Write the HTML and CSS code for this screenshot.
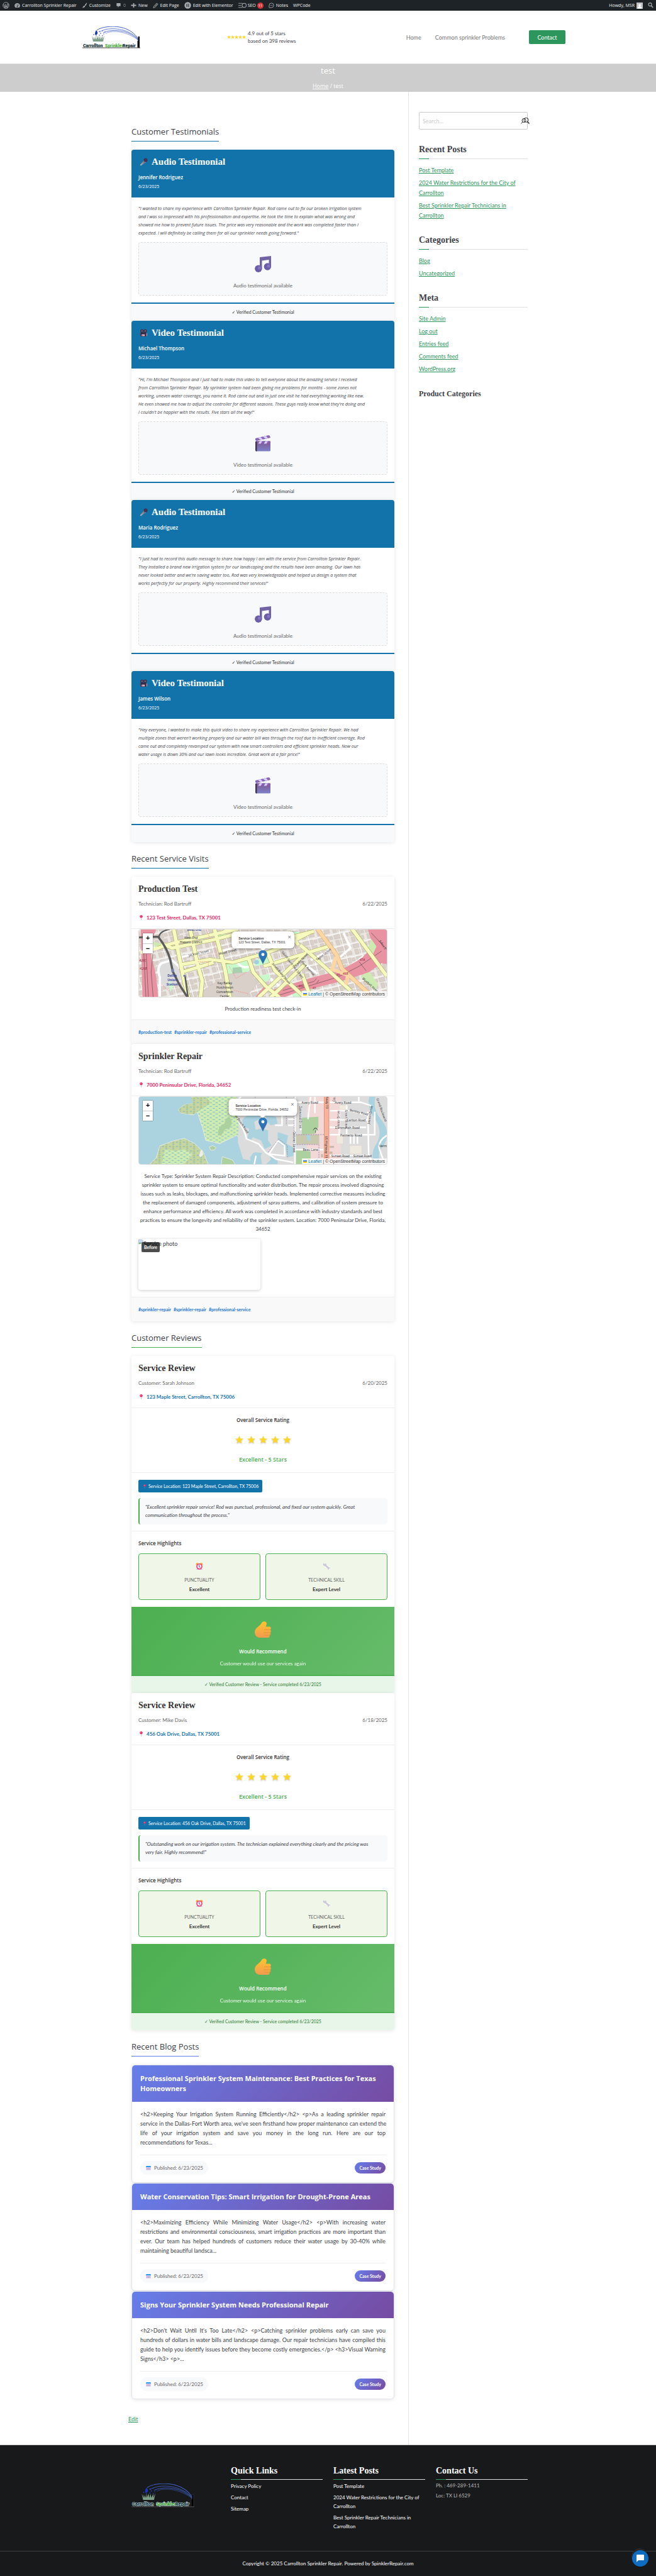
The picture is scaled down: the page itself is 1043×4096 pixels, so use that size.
FILE: index.html
```html
<!DOCTYPE html>
<html lang="en">
<head>
<meta charset="utf-8">
<meta name="viewport" content="width=device-width, initial-scale=1">
<title>test – Carrollton Sprinkler Repair</title>
<link rel="stylesheet" href="styles.css">
</head>
<body>
<svg class="defs" aria-hidden="true">
  <defs>
    <linearGradient id="gMic" x1="0" y1="1" x2="1" y2="0"><stop offset="0" stop-color="#b9b4bd"/><stop offset="1" stop-color="#6d6670"/></linearGradient>
    <linearGradient id="gClap" x1="0" y1="0" x2="0" y2="1"><stop offset="0" stop-color="#7c5a8d"/><stop offset="1" stop-color="#7f7fc9"/></linearGradient>
    <linearGradient id="gThumb" x1="0" y1="0" x2="0" y2="1"><stop offset="0" stop-color="#ffc62e"/><stop offset="1" stop-color="#f09a50"/></linearGradient>
    <linearGradient id="gPin" x1="0" y1="0" x2="0" y2="1"><stop offset="0" stop-color="#2e7bc0"/><stop offset="1" stop-color="#2a6fae"/></linearGradient>
  </defs>
  <symbol id="mic" viewBox="0 0 24 24"><path d="M1 21 12 8l5 5L4 23z" fill="url(#gMic)"/><path d="m11 7 6 7 2-1-7-7z" fill="#c8c3d0"/><circle cx="17.500" cy="6.500" r="5.800" fill="#3b2d4a"/><path d="m14 3 7 7M12 6l6 6M17 1l6 6" stroke="#6c5382" stroke-width="1"/></symbol>
  <symbol id="cam" viewBox="0 0 24 24"><circle cx="7" cy="6" r="5" fill="#42334c"/><circle cx="16.500" cy="6" r="5" fill="#42334c"/><circle cx="7" cy="6" r="1.700" fill="#8b7a98"/><circle cx="16.500" cy="6" r="1.700" fill="#8b7a98"/><rect x="3" y="10" width="16" height="12" rx="1.500" fill="#38283f"/><rect x="6" y="16" width="9" height="5" fill="#d9c9dc"/><path d="M7 18h4v2H7z" fill="#e0455f"/><path d="m19 14 4-2v10l-4-2z" fill="#8b7a98"/><path d="M0 13h3v3H0z" fill="#594763"/></symbol>
  <symbol id="note" viewBox="0 0 26 26"><path d="M8 2 26 0v17h-3.500V6L11.500 7.500V20H8z" fill="#7163a6"/><circle cx="5.800" cy="20.300" r="5.700" fill="#6c5ea6"/><circle cx="20.300" cy="17" r="5.700" fill="#6c5ea6"/><circle cx="7.500" cy="19" r="2.500" fill="#8573c4"/><circle cx="22" cy="16" r="2.500" fill="#8573c4"/></symbol>
  <symbol id="clap" viewBox="0 0 24 26"><path d="M0 5 21 0l2 1 1 3L2 9 0 8z" fill="#8a66b4"/><path d="m4 4 4 3.500 4-1L8 3zM12 2l4 3.500 4-1L17 1z" fill="#d6ceff"/><rect y="9.500" width="24" height="16" rx="1.500" fill="url(#gClap)"/><path d="M1 9.500h23v4H1z" fill="#8a5fb0"/><path d="M7 9.500h4l-2.500 4h-4zM16 9.500h4l-2.500 4h-4z" fill="#d6ceff"/><path d="M0 10h2.500v15.500H1L0 24z" fill="#3f3450"/></symbol>
  <symbol id="pin" viewBox="0 0 10 16"><path d="M4.500 8h1v8h-1z" fill="#9a8fa2"/><circle cx="5" cy="4.500" r="4.500" fill="#f0326a"/><circle cx="3.600" cy="3.200" r="1.300" fill="#ff8fb0"/></symbol>
  <symbol id="star" viewBox="0 0 24 24"><path d="m12 0 3.100 8.300 8.900.2-7 5.500 2.500 8.600L12 17.600l-7.500 5L7 14 0 8.500l8.900-.2z" fill="#fdd622"/></symbol>
  <symbol id="alarm" viewBox="0 0 24 24"><path d="M1 6a5 5 0 0 1 8-4L3 8zM23 6a5 5 0 0 0-8-4l6 6z" fill="#f5a623"/><path d="m4 20-2 3h20l-2-3z" fill="#d9b6f0"/><circle cx="12" cy="12.500" r="9.700" fill="#f2416e"/><circle cx="12" cy="12.500" r="6.300" fill="#ece4fb"/><path d="M11.500 8v5l3 2.500" fill="none" stroke="#3b2d4a" stroke-width="1.600"/></symbol>
  <symbol id="wrench" viewBox="0 0 24 24"><path d="M1 5 4 1.500 5.500 5l2.500.500L8.500 2l3 2.500v4l8.500 7c2-.5 4 1 4 3.500l-2.500-.5-2 1.500.5 3c-3 0-4.500-2-4-4.500l-8.500-7.500C4 11.500 1 9 1 5z" fill="#cdc4dd"/></symbol>
  <symbol id="thumb" viewBox="0 0 26 26"><path d="M0 17.500c0-4 2-6.500 5.500-9C8.500 6 10 4.500 11 2.500 12.500-.5 17-.5 18.500 2c1 2 0 4.500-1 6.500H24c2 .8 2.300 3.800.6 5 1.600 1 1.600 3.600 0 4.600 1.200 1.200.8 3.200-.8 3.900C24 24.500 23 26 21 26H9c-5.500 0-9-3.500-9-8.500z" fill="url(#gThumb)"/><path d="M15 13.500h10M14 18h11M15 22h9" stroke="#e0912b" stroke-width=".8" fill="none"/></symbol>
  <symbol id="cal" viewBox="0 0 16 14"><rect y="1" width="16" height="13" rx="1.500" fill="#e3d5f3"/><path d="M1 0h14l1 4H0z" fill="#2196f3"/><path d="M3.500 6v6M6.500 6v6M9.500 6v6M12.500 6v6" stroke="#9c86bb" stroke-width="1.600" stroke-dasharray="1.500 .7"/></symbol>
  <symbol id="marker" viewBox="0 0 14 23"><path d="M7 0a6.800 6.800 0 0 1 6.800 7c0 4-4 8.500-6.800 15.500C4.200 15.500.2 11 .2 7A6.800 6.800 0 0 1 7 0z" fill="url(#gPin)" stroke="#2564a0" stroke-width=".6"/><circle cx="7" cy="7" r="2.600" fill="#fff"/></symbol>
  <symbol id="broken" viewBox="0 0 16 16"><path d="M1 1h10l4 4v3l-4 2-4 5H1z" fill="#c5dcf5" stroke="#9aa0a6"/><path d="M2 13c2-4 4-4 6-1l-1 2H2z" fill="#55a84f"/></symbol>
  <symbol id="arcs" viewBox="0 0 92 24">
    <g fill="none" stroke="#3f5fc4"><path d="M23 6C31 0 55-3 72 5c10 5 16 12 18 18" stroke-width="1"/><path d="M27 9c12-8 34-6 46 0 9 4 14 9 17 14" stroke-width=".8"/><path d="M33 10c12-6 32-4 43 2 7 4 11 7 14 11" stroke-width=".8"/><path d="M39 10c12-4 28-1 39 5 6 3 9 5 11 8" stroke-width=".6"/></g>
  </symbol>
  <symbol id="drops" viewBox="0 0 92 35">
    <path d="M22 6c2 2 3 5 1 7-1 1-3 1-3-1 0-3 1-4 2-6z" fill="#1a35c4"/>
    <g fill="#2a48c4"><circle cx="27" cy="8" r=".8"/><circle cx="32" cy="7" r=".7"/><circle cx="36" cy="9" r=".7"/><circle cx="29" cy="11" r=".8"/><circle cx="34" cy="12" r=".7"/><circle cx="18" cy="13" r=".8"/><circle cx="27" cy="14" r=".8"/><circle cx="32" cy="14.500" r=".7"/><circle cx="22" cy="15" r=".7"/><circle cx="38" cy="11" r=".6"/></g>
    <path d="m17 24-2-9 3 6 0-5 2 5 2-6 0 6 3-6 1 6 2-6 1 6 3-6 0 6 3-7-2 10z" fill="#7d9e86"/>
  </symbol>
</svg>

<nav class="adminbar" aria-label="Toolbar">
  <ul class="bar-left">
    <li class="i-wp"><svg viewBox="0 0 20 20" class="ic11"><circle cx="10" cy="10" r="8.800" fill="none" stroke="#a7aaad" stroke-width="1.600"/><path d="m3.500 7 4 10 2.500-7-1.500-3.500M9 7l4 10 3-8c0-2-1-3-2-4" fill="none" stroke="#a7aaad" stroke-width="2"/></svg></li>
    <li><a href="#"><svg viewBox="0 0 20 20" class="ic9"><path d="M10 2a9 9 0 0 0-8 14c0 1 1 2 2 2h12c1 0 2-1 2-2a9 9 0 0 0-8-14z" fill="#a7aaad"/><path d="m10 14 3-8" stroke="#1d2327" stroke-width="2"/><circle cx="10" cy="14" r="2" fill="#1d2327"/><circle cx="5" cy="11" r="1" fill="#1d2327"/><circle cx="15" cy="11" r="1" fill="#1d2327"/><circle cx="7" cy="6.500" r="1" fill="#1d2327"/></svg>Carrollton Sprinkler Repair</a></li>
    <li><a href="#"><svg viewBox="0 0 20 20" class="ic9"><path d="M18 1c1 1 0 4-5 11l-3-2c4-6 7-9 8-9zM9 11l3 2c-1 4-5 6-10 6 2-3 3-7 7-8z" fill="#a7aaad"/></svg>Customize</a></li>
    <li class="dim"><a href="#"><svg viewBox="0 0 20 20" class="ic9"><path d="M4 2h12c1 0 1 .5 1 1v9c0 1 0 1-1 1h-5l-3 6v-6H4c-1 0-1 0-1-1V3c0-.5 0-1 1-1z" fill="#a7aaad"/></svg>0</a></li>
    <li><a href="#"><svg viewBox="0 0 20 20" class="ic9"><path d="M8 2h4v6h7v4h-7v6H8v-6H1V8h7z" fill="#a7aaad"/></svg>New</a></li>
    <li><a href="#"><svg viewBox="0 0 20 20" class="ic9"><path d="m14 2 4 4-10 11-6 2 2-6z" fill="none" stroke="#a7aaad" stroke-width="2"/><path d="m7 14 8-9" stroke="#a7aaad" stroke-width="2"/></svg>Edit Page</a></li>
    <li><a href="#"><svg viewBox="0 0 20 20" class="ic11"><circle cx="10" cy="10" r="9.500" fill="#a7aaad"/><path d="M6.500 6v8M9 6.700h5M9 10h5M9 13.300h5" stroke="#1d2327" stroke-width="1.600"/></svg>Edit with Elementor</a></li>
    <li class="seo"><a href="#"><svg viewBox="0 0 24 20" class="ic12"><path d="M0 4h12M0 10h8M0 16h12" stroke="#a7aaad" stroke-width="1.600"/><circle cx="17" cy="10" r="6" fill="none" stroke="#a7aaad" stroke-width="2"/></svg>SEO <b class="count">11</b></a></li>
    <li><a href="#"><svg viewBox="0 0 20 20" class="ic9"><path d="M2 18V10a8 8 0 1 1 8 8z" fill="none" stroke="#a7aaad" stroke-width="2"/><circle cx="6.500" cy="10" r="1.200" fill="#a7aaad"/><circle cx="10" cy="10" r="1.200" fill="#a7aaad"/><circle cx="13.500" cy="10" r="1.200" fill="#a7aaad"/></svg>Notes</a></li>
    <li><a href="#">WPCode</a></li>
  </ul>
  <ul class="bar-right">
    <li><a href="#">Howdy, MSR <svg viewBox="0 0 20 20" class="ic10"><path d="M0 0h20v20H0z" fill="#c3c4c7"/><path d="M10 5c6 0 3 7 2 8l4 2v4H4v-4l4-2c-1-1-4-8 2-8z" fill="#fff"/></svg></a></li>
    <li><svg viewBox="0 0 20 20" class="ic9"><circle cx="8" cy="7" r="5.500" fill="none" stroke="#a7aaad" stroke-width="2.500"/><path d="m12 11 6 7" stroke="#a7aaad" stroke-width="3.500"/></svg></li>
  </ul>
</nav>

<header class="site-header">
  <div class="header-inner">
    <a href="#" class="logo" aria-label="Carrollton Sprinkler Repair">
      <svg viewBox="0 0 92 35"><use href="#arcs" width="92" height="24"/><use href="#drops" width="92" height="35"/><path d="M88.500 16h2.500v18h-3.500V23h1z" fill="#111"/><path d="M0 33.500h92v1H0z" fill="#444"/>
      <g class="logo-text"><text x="1" y="32.500" fill="#0b2a30">Carrollton</text><text x="36" y="32.500" fill="#4fae3e">Sprinkler</text><text x="64" y="32.500" fill="#0b2a30">Repair</text></g></svg>
    </a>
    <div class="rating">
      <span class="mini-stars"><svg><use href="#star"/></svg><svg><use href="#star"/></svg><svg><use href="#star"/></svg><svg><use href="#star"/></svg><svg><use href="#star"/></svg></span>
      <p>4.9 out of 5 stars<br>based on 398 reviews</p>
    </div>
    <nav class="main-nav" aria-label="Main"><a href="#">Home</a><a href="#">Common sprinkler Problems</a></nav>
    <button type="button" class="contact-btn">Contact</button>
  </div>
</header>

<section class="page-title">
  <h1>test</h1>
  <p><a href="#">Home</a> / test</p>
</section>

<div class="layout">
<main class="content">
  <h2 class="sec">Customer Testimonials</h2>

  <article class="card">
    <header class="t-head"><h3><svg class="ic14"><use href="#mic"/></svg>Audio Testimonial</h3><strong>Jennifer Rodriguez</strong><time>6/23/2025</time></header>
    <div class="t-body">
      <p class="quote"><span>"I wanted to share my experience with Carrollton Sprinkler Repair. Rod came out to fix our broken irrigation system</span> <span>and I was so impressed with his professionalism and expertise. He took the time to explain what was wrong and</span> <span>showed me how to prevent future issues. The price was very reasonable and the work was completed faster than I</span> <span>expected. I will definitely be calling them for all our sprinkler needs going forward."</span></p>
      <div class="media"><svg class="ic26"><use href="#note"/></svg><span>Audio testimonial available</span></div>
    </div>
    <footer class="t-foot"><i>✓</i> Verified Customer Testimonial</footer>
  </article>

  <article class="card">
    <header class="t-head"><h3><svg class="ic14"><use href="#cam"/></svg>Video Testimonial</h3><strong>Michael Thompson</strong><time>6/23/2025</time></header>
    <div class="t-body">
      <p class="quote"><span>"Hi, I'm Michael Thompson and I just had to make this video to tell everyone about the amazing service I received</span> <span>from Carrollton Sprinkler Repair. My sprinkler system had been giving me problems for months - some zones not</span> <span>working, uneven water coverage, you name it. Rod came out and in just one visit he had everything working like new.</span> <span>He even showed me how to adjust the controller for different seasons. These guys really know what they're doing and</span> <span>I couldn't be happier with the results. Five stars all the way!"</span></p>
      <div class="media"><svg class="ic26"><use href="#clap"/></svg><span>Video testimonial available</span></div>
    </div>
    <footer class="t-foot"><i>✓</i> Verified Customer Testimonial</footer>
  </article>

  <article class="card">
    <header class="t-head"><h3><svg class="ic14"><use href="#mic"/></svg>Audio Testimonial</h3><strong>Maria Rodriguez</strong><time>6/23/2025</time></header>
    <div class="t-body">
      <p class="quote"><span>"I just had to record this audio message to share how happy I am with the service from Carrollton Sprinkler Repair.</span> <span>They installed a brand new irrigation system for our landscaping and the results have been amazing. Our lawn has</span> <span>never looked better and we're saving water too. Rod was very knowledgeable and helped us design a system that</span> <span>works perfectly for our property. Highly recommend their services!"</span></p>
      <div class="media"><svg class="ic26"><use href="#note"/></svg><span>Audio testimonial available</span></div>
    </div>
    <footer class="t-foot"><i>✓</i> Verified Customer Testimonial</footer>
  </article>

  <article class="card">
    <header class="t-head"><h3><svg class="ic14"><use href="#cam"/></svg>Video Testimonial</h3><strong>James Wilson</strong><time>6/23/2025</time></header>
    <div class="t-body">
      <p class="quote"><span>"Hey everyone, I wanted to make this quick video to share my experience with Carrollton Sprinkler Repair. We had</span> <span>multiple zones that weren't working properly and our water bill was through the roof due to inefficient coverage. Rod</span> <span>came out and completely revamped our system with new smart controllers and efficient sprinkler heads. Now our</span> <span>water usage is down 30% and our lawn looks incredible. Great work at a fair price!"</span></p>
      <div class="media"><svg class="ic26"><use href="#clap"/></svg><span>Video testimonial available</span></div>
    </div>
    <footer class="t-foot"><i>✓</i> Verified Customer Testimonial</footer>
  </article>

  <h2 class="sec">Recent Service Visits</h2>

  <article class="card">
    <header class="v-head"><h3>Production Test</h3><p class="meta"><span>Technician: Rod Bartruff</span><time>6/22/2025</time></p><p class="addr pink"><svg class="icpin"><use href="#pin"/></svg>123 Test Street, Dallas, TX 75001</p></header>
    <div class="map">
      <svg class="map-art" viewBox="0 0 396 109" preserveAspectRatio="xMidYMid slice">
        <defs><pattern id="bld" width="92" height="84" patternUnits="userSpaceOnUse" patternTransform="rotate(-14)"><path d="M0 0h92v84H0z" fill="#ebe7e3"/><g fill="#d9d0c9" stroke="#c4b6ab" stroke-width="2"><path d="M6 8h34v26H6zM48 6h16v34H48zM70 12h18v20H70zM8 44h20v32H8zM36 48h44v24H36z"/></g><path d="M0 2h92M44 0v84" stroke="#fff" stroke-width="4"/></pattern></defs>
        <g transform="scale(.277 .2425) translate(-70 -535)">
          <path d="M70 535h1430v450H70z" fill="url(#bld)"/>
          <path d="M180 760q60-60 110-10l20 120-60 60q-60-20-70-90z" fill="#dcdcdc"/>
          <g fill="#c8facc"><path d="m565 770 130-35 20 60-40 60-100 10zM735 745l75-35 10 50-80 20zM740 850l80-20 10 30-40 30zM240 870l30 40-20 40zM940 560l50-10 10 30-40 15zM530 565l40 0 0 30-40 0zM955 960l80-40 20 60h-100z"/></g>
          <path d="m1350 850 40-50 60 100-20 40zM1385 680l25-80 30 50zM150 620l50 10-30 40z" fill="#cdebb0"/>
          <path d="m610 790 50-5 10 55-60 0z" fill="#aacfaf"/>
          <circle cx="749" cy="753" r="14" fill="#9fcfe0"/>
          <path d="m450 930 140-100 130-15 30 80-60 85H430z" fill="#d9d0c9" stroke="#c4b6ab"/>
          <g fill="none" stroke="#fff" stroke-width="14"><path d="M190 980V850q-20-60 10-90l60-20 60 60M640 760q30 40 70 20M830 860l60 60 70-60M1020 760l80 70M1250 560l40 100-60 60M1060 740l120-70M1280 790l90-80M540 680l140-40M310 720l170-40"/></g>
          <g fill="#e892a2"><path d="M80 535h90q-50 130-20 220 25 90 30 230H90zM830 940l220-80 170-50q80-40 140-90l60-70 75 40V740l-100 80-160 60-250 70-90 40z"/><path d="M1390 535h110v230q-60 0-70-80zM740 985l50-70 20 20-30 50z"/></g>
          <path d="m1410 600 30 50-20 50-30-10z" fill="#cdebb0"/>
          <g fill="none" stroke="#3b3b3b" stroke-width="2"><path d="M95 620l15 365M112 700l12 285M150 700l-10 120 12 165M880 970l340-120 120-70 130-100M900 940l180-60M1340 750l40 60M1410 560l90 110M1080 880l14-20M1095 890l14-20"/></g>
          <g fill="none" stroke="#a8ab5e" stroke-width="26" stroke-linejoin="round"><path d="M180 660l80-30 240-60 140-35M200 630l60 30 240-55 120-35M310 770l170-35 130 20 190-60 90-40 170-100M330 815l170-60M270 535l60 340 25 110M365 535l40 220 30 120-10 110M505 535l60 260 30 190M590 535l-50 30M700 720l30 100 70 90 80 75M815 700l40 110 110 110 60 65M760 985l280-300M830 985l200-220M1000 640l70 70 220 230M790 780l370-130M1300 535l200 310M990 640l-60-90M940 590l140-40M1010 830l50 155"/></g>
          <g fill="none" stroke="#f7fabf" stroke-width="21" stroke-linejoin="round"><path d="M80 690l100-30 80-30 240-60 140-35M200 630l60 30 240-55 120-35M310 770l170-35 130 20 190-60 90-40 170-100M330 815l170-60M270 535l60 340 25 110M365 535l40 220 30 120-10 110M505 535l60 260 30 190M590 535l-50 30M700 720l30 100 70 90 80 75M815 700l40 110 110 110 60 65M760 985l280-300M830 985l200-220M1000 640l70 70 220 230M790 780l370-130M1300 535l200 310M990 640l-60-90M940 590l140-40M1010 830l50 155"/></g>
          <g fill="none" stroke="#e0a35a" stroke-width="26"><path d="M1100 535l110 170 30 90 180 190"/></g><g fill="none" stroke="#fcd6a4" stroke-width="22"><path d="M1100 535l110 170 30 90 180 190M1205 720l-20 80 90 40-10 60"/></g>
          <path d="M70 590l110-5q50 70 70 150l15 80 40 90 45 80" fill="none" stroke="#5c5c5c" stroke-width="13"/>
          <path d="M250 535q-80 20-60 70M335 840l18 145" fill="none" stroke="#5c5c5c" stroke-width="9"/>
          <path d="M257 798h15v20h-15zM326 836h11v13h-11z" fill="#7981b0"/>
          <g fill="none" stroke="#fa8072" stroke-width="3" stroke-dasharray="6 5"><path d="M590 780l40 80 60-40M410 750h60v30M500 620l20 100M200 900l40 40M620 940l80 20M460 540l20 60"/></g>
        </g>
        <g class="map-lbl">
          <text x="88" y="3" fill="#4248a0" font-weight="700">West End</text>
          <text x="83" y="16">West End</text><text x="83" y="23">Historic District</text>
          <text x="53" y="76" fill="#4248a0" font-weight="700">Dallas</text><text x="53" y="83" fill="#4248a0" font-weight="700">Union</text><text x="53" y="90" fill="#4248a0" font-weight="700">Station</text>
          <text x="137" y="88">Kay Bailey</text><text x="137" y="95">Hutchinson</text><text x="137" y="102">Convention</text><text x="137" y="109">Center</text>
          <text transform="translate(96 40) rotate(-13)">Jackson Street</text><text transform="translate(142 38) rotate(-14)">Wood Street</text>
          <text transform="translate(244 58) rotate(52)">South Saint Paul Street</text><text transform="translate(226 72) rotate(50)">South Ervay Street</text><text transform="translate(261 50) rotate(-46)">Cadiz Street</text><text transform="translate(269 64) rotate(48)">Park Avenue</text><text transform="translate(296 42) rotate(-38)">Taylor Street</text><text transform="translate(369 91) rotate(42)">Bluebell Street</text><text transform="translate(388 26) rotate(58)">Julius S</text>
          <g fill="#a02040" font-style="italic"><text x="6" y="52">428C</text><text x="7" y="65">428B</text><text x="259" y="93">46A</text><text x="280" y="96">46</text><text x="318" y="75">45</text><text x="330" y="73">46B</text><text x="357" y="51">47A</text></g>
        </g>
      </svg>
      <div class="zoomer"><button type="button" aria-label="Zoom in">+</button><button type="button" aria-label="Zoom out">−</button></div>
      <div class="popup"><strong>Service Location</strong><span>123 Test Street, Dallas, TX 75001</span><b>×</b></div>
      <svg class="marker"><use href="#marker"/></svg>
      <p class="attrib"><svg viewBox="0 0 12 8"><path d="M0 0h12v4H0z" fill="#4c7be1"/><path d="M0 4h12v4H0z" fill="#ffd500"/></svg><a href="#">Leaflet</a> | © OpenStreetMap contributors</p>
    </div>
    <p class="v-text">Production readiness test check-in</p>
    <footer class="tags"><a href="#">#production-test</a><a href="#">#sprinkler-repair</a><a href="#">#professional-service</a></footer>
  </article>

  <article class="card">
    <header class="v-head"><h3>Sprinkler Repair</h3><p class="meta"><span>Technician: Rod Bartruff</span><time>6/22/2025</time></p><p class="addr pink"><svg class="icpin"><use href="#pin"/></svg>7000 Peninsular Drive, Florida, 34652</p></header>
    <div class="map">
      <svg class="map-art" viewBox="0 0 396 109" preserveAspectRatio="xMidYMid slice">
        <defs><pattern id="marsh" width="34" height="22" patternUnits="userSpaceOnUse"><path d="M0 0h34v22H0z" fill="#cdebb0"/><path d="M2 5h12M20 16h12" stroke="#4f9ed8" stroke-width="2.500"/><path d="M22 4h2M6 14h2M28 9h2" stroke="#fff" stroke-width="2"/></pattern>
        <pattern id="mang" width="40" height="26" patternUnits="userSpaceOnUse"><path d="M0 0h40v26H0z" fill="#c6d6a0"/><path d="M3 6h12M22 19h12" stroke="#4f9ed8" stroke-width="2.500"/><circle cx="28" cy="7" r="4" fill="none" stroke="#6f9a5d" stroke-width="1.500"/></pattern></defs>
        <g transform="scale(.277 .2702) translate(-70 -99)">
          <path d="M70 99h1430v405H70z" fill="#aad3df"/>
          <path d="M370 99l20 40-60 10-35 30 20 20 70 10 20-20 30 90 20 80 80 20 60-30 40-20 50 80 20-80-20-130 10-100z" fill="url(#marsh)" stroke="#f2efe9" stroke-width="3"/>
          <path d="M370 105l10 34-50 10-35 30 20 20 70 8 40-30 60-40-30-35z" fill="url(#mang)"/>
          <path d="M525 330q0-60 40-70 0-40 30-35 20 30 0 60l-30 10-20 35z" fill="#add19e"/>
          <path d="M130 502l40-40 20-70 80-30 60-15 60 30 50 50 30 75z" fill="url(#mang)" stroke="#f2efe9" stroke-width="3"/>
          <path d="M200 502l20-90 60 10 50-10 50 30-50 60z" fill="url(#marsh)"/>
          <path d="M475 400l20-10 20 12-10 14-20 2zM550 456l60 20 15 26h-80z" fill="#add19e" stroke="#f2efe9" stroke-width="3"/>
          <path d="M425 420l10-5 5 30-15 15-8-10z" fill="#eee"/>
          <path d="M635 99h865v405H850l-20-30-30 30h-50l30-70-40-5-20 50-50-10-30-100 5-100-15-90z" fill="#dcdcdc"/>
          <g fill="#aad3df"><path d="M665 240q30-40 70-30l20-10 20 30-40 20 10 60-30 50-20-10 10-60-30-10zM800 210l60 10 10 40-40 10-20-20zM735 300l40-10 40 10 0 60 20 30-40 20-20-50-50-20zM870 310l60 20-10 50 40 20 0 50-30 10-20-60-40-30zM780 502l-10-60-40-10-20 30 10 40zM820 440l50 30v30h-30z"/></g>
          <path d="M1045 99h190v405h-190q-20-200 0-405z" fill="#f2d9d8"/>
          <g fill="#add19e"><path d="M1010 225l95-5 0 60-20 40-75 5zM975 415l85 10v80h-85z"/></g>
          <path d="M975 325h135v58H975z" fill="#c8c8ae"/><path d="M1035 328h24v34l-18-2z" fill="#aad3df"/>
          <path d="M1400 99q-20 60 30 130 50 80 10 150-40 60-10 125h35q-30-70 20-120 40-80-20-150-50-60-30-135z" fill="#aad3df"/>
          <path d="M1210 330h38v50h-38zM1285 390h70v50h-70zM1225 150h50v30h-50z" fill="#eeeadf" stroke="#cfc8b4"/>
          <g fill="none" stroke="#fff" stroke-width="9"><path d="M640 240q40 60 50 110l70 30 40 50 60 40 100 20M970 99v405M970 134h170M1170 134h180l60 20M1170 238h220M1170 184h120l90 25M1170 282h210M1170 326h260M1170 448h220M975 414h160M1338 99v30M1390 190l5 250 20 50M1430 190v140M1500 330q-60 40-40 90l30 84M1225 180v140M1268 150v170M930 270h40M930 234h40M895 150v120h-40M1003 150v150M1060 99l-15 135M1085 99v100M1290 330v50M1310 330v50M1330 330v50M820 440l50-80 40 30v60zM745 450l-10 50M660 99l-40 40"/></g>
          <g fill="none" stroke="#a07fa8" stroke-width="3" stroke-dasharray="9 5"><path d="M920 99v170M965 99v205M975 325h170M1108 384v110M980 384h128M815 430l60-80 50 40v75M740 99v25"/></g>
          <path d="M1152 99v405" stroke="#df8a74" stroke-width="30"/><path d="M1152 99v405" stroke="#f9b29c" stroke-width="24"/>
          <path d="M1170 392h25v12h-25zM1120 440h12v20h-12zM1170 425h16v14h-16z" fill="#cbb9ab"/>
          <path d="M1088 300v15M1078 292q10-12 20 0M1074 300q14-24 28 0" fill="none" stroke="#555" stroke-width="3"/>
        </g>
        <g class="map-lbl">
          <text x="273" y="12">Avery Road</text><text x="326" y="12">Avery Road</text><text transform="translate(351 27) rotate(14)">Berkley Road</text><text x="347" y="40">Carlton Road</text><text x="333" y="52">Dartmouth Road</text><text x="339" y="64">Palmetto Road</text><text x="274" y="87">Beau Lane</text><text x="322" y="97">Sunset Road</text><text x="357" y="97">Sunset Road</text><text x="390" y="81">Verm</text>
          <text transform="translate(256 33) rotate(90)">Oakwood Drive</text><text transform="translate(246 73) rotate(90)">Oelsner Street</text><text transform="translate(297 81) rotate(90)">US Highway 19</text><text transform="translate(299 10) rotate(90)">hway 19</text><text transform="translate(321 36) rotate(-90)">Astor Drive</text><text transform="translate(330 36) rotate(90)">Green Street</text><text transform="translate(386 22) rotate(70)">Grand Boulevard</text><text transform="translate(371 30) rotate(-80)">Jasmin Drive</text><text transform="translate(162 44) rotate(55)">oor Beach Road</text><text transform="translate(314 4) rotate(-90)">Cou</text>
        </g>
      </svg>
      <div class="zoomer"><button type="button" aria-label="Zoom in">+</button><button type="button" aria-label="Zoom out">−</button></div>
      <div class="popup"><strong>Service Location</strong><span>7000 Peninsular Drive, Florida, 34652</span><b>×</b></div>
      <svg class="marker"><use href="#marker"/></svg>
      <p class="attrib"><svg viewBox="0 0 12 8"><path d="M0 0h12v4H0z" fill="#4c7be1"/><path d="M0 4h12v4H0z" fill="#ffd500"/></svg><a href="#">Leaflet</a> | © OpenStreetMap contributors</p>
    </div>
    <p class="v-text v-long"><span>Service Type: Sprinkler System Repair Description: Conducted comprehensive repair services on the existing</span> <span>sprinkler system to ensure optimal functionality and water distribution. The repair process involved diagnosing</span> <span>issues such as leaks, blockages, and malfunctioning sprinkler heads. Implemented corrective measures including</span> <span>the replacement of damaged components, adjustment of spray patterns, and calibration of system pressure to</span> <span>enhance performance and efficiency. All work was completed in accordance with industry standards and best</span> <span>practices to ensure the longevity and reliability of the sprinkler system. Location: 7000 Peninsular Drive, Florida,</span> <span>34652</span></p>
    <div class="photo"><svg><use href="#broken"/></svg><span>Service photo</span><b>Before</b></div>
    <footer class="tags"><a href="#">#sprinkler-repair</a><a href="#">#sprinkler-repair</a><a href="#">#professional-service</a></footer>
  </article>

  <h2 class="sec green">Customer Reviews</h2>

  <article class="card">
    <header class="v-head"><h3>Service Review</h3><p class="meta"><span>Customer: Sarah Johnson</span><time>6/20/2025</time></p><p class="addr blue"><svg class="icpin"><use href="#pin"/></svg>123 Maple Street, Carrollton, TX 75006</p></header>
    <section class="r-rate"><h4>Overall Service Rating</h4><div class="stars"><svg><use href="#star"/></svg><svg><use href="#star"/></svg><svg><use href="#star"/></svg><svg><use href="#star"/></svg><svg><use href="#star"/></svg></div><p>Excellent - 5 Stars</p></section>
    <section class="r-quote"><p class="loc"><svg><use href="#pin"/></svg>Service Location: 123 Maple Street, Carrollton, TX 75006</p><blockquote><span>"Excellent sprinkler repair service! Rod was punctual, professional, and fixed our system quickly. Great</span> <span>communication throughout the process."</span></blockquote></section>
    <section class="r-high"><h4>Service Highlights</h4><div class="pair"><div><svg><use href="#alarm"/></svg><span>PUNCTUALITY</span><strong>Excellent</strong></div><div><svg><use href="#wrench"/></svg><span>TECHNICAL SKILL</span><strong>Expert Level</strong></div></div></section>
    <section class="r-rec"><svg class="ic26"><use href="#thumb"/></svg><h4>Would Recommend</h4><p>Customer would use our services again</p></section>
    <footer class="r-foot"><i>✓</i> Verified Customer Review - Service completed 6/23/2025</footer>
  </article>

  <article class="card">
    <header class="v-head"><h3>Service Review</h3><p class="meta"><span>Customer: Mike Davis</span><time>6/18/2025</time></p><p class="addr blue"><svg class="icpin"><use href="#pin"/></svg>456 Oak Drive, Dallas, TX 75001</p></header>
    <section class="r-rate"><h4>Overall Service Rating</h4><div class="stars"><svg><use href="#star"/></svg><svg><use href="#star"/></svg><svg><use href="#star"/></svg><svg><use href="#star"/></svg><svg><use href="#star"/></svg></div><p>Excellent - 5 Stars</p></section>
    <section class="r-quote"><p class="loc"><svg><use href="#pin"/></svg>Service Location: 456 Oak Drive, Dallas, TX 75001</p><blockquote><span>"Outstanding work on our irrigation system. The technician explained everything clearly and the pricing was</span> <span>very fair. Highly recommend!"</span></blockquote></section>
    <section class="r-high"><h4>Service Highlights</h4><div class="pair"><div><svg><use href="#alarm"/></svg><span>PUNCTUALITY</span><strong>Excellent</strong></div><div><svg><use href="#wrench"/></svg><span>TECHNICAL SKILL</span><strong>Expert Level</strong></div></div></section>
    <section class="r-rec"><svg class="ic26"><use href="#thumb"/></svg><h4>Would Recommend</h4><p>Customer would use our services again</p></section>
    <footer class="r-foot"><i>✓</i> Verified Customer Review - Service completed 6/23/2025</footer>
  </article>

  <h2 class="sec indigo">Recent Blog Posts</h2>

  <article class="card post">
    <header><h3><span>Professional Sprinkler System Maintenance: Best Practices for Texas</span> <span>Homeowners</span></h3></header>
    <p><span>&lt;h2&gt;Keeping Your Irrigation System Running Efficiently&lt;/h2&gt; &lt;p&gt;As a leading sprinkler repair</span> <span>service in the Dallas-Fort Worth area, we've seen firsthand how proper maintenance can extend the</span> <span>life of your irrigation system and save you money in the long run. Here are our top</span> <span>recommendations for Texas...</span></p>
    <footer><span class="pub"><svg><use href="#cal"/></svg>Published: 6/23/2025</span><span class="badge">Case Study</span></footer>
  </article>
  <article class="card post">
    <header><h3><span>Water Conservation Tips: Smart Irrigation for Drought-Prone Areas</span></h3></header>
    <p><span>&lt;h2&gt;Maximizing Efficiency While Minimizing Water Usage&lt;/h2&gt; &lt;p&gt;With increasing water</span> <span>restrictions and environmental consciousness, smart irrigation practices are more important than</span> <span>ever. Our team has helped hundreds of customers reduce their water usage by 30-40% while</span> <span>maintaining beautiful landsca...</span></p>
    <footer><span class="pub"><svg><use href="#cal"/></svg>Published: 6/23/2025</span><span class="badge">Case Study</span></footer>
  </article>
  <article class="card post">
    <header><h3><span>Signs Your Sprinkler System Needs Professional Repair</span></h3></header>
    <p><span>&lt;h2&gt;Don't Wait Until It's Too Late&lt;/h2&gt; &lt;p&gt;Catching sprinkler problems early can save you</span> <span>hundreds of dollars in water bills and landscape damage. Our repair technicians have compiled this</span> <span>guide to help you identify issues before they become costly emergencies.&lt;/p&gt; &lt;h3&gt;Visual Warning</span> <span>Signs&lt;/h3&gt; &lt;p&gt;...</span></p>
    <footer><span class="pub"><svg><use href="#cal"/></svg>Published: 6/23/2025</span><span class="badge">Case Study</span></footer>
  </article>

  <p class="edit"><a href="#">Edit</a></p>
</main>

<aside class="sidebar">
  <form class="search"><input type="search" placeholder="Search..." aria-label="Search"><button type="submit" aria-label="Search"><svg viewBox="0 0 28 20"><g fill="none" stroke="#111" stroke-width="1.800"><circle cx="10" cy="9" r="6"/><path d="m6 14-5 5"/><circle cx="17" cy="7.500" r="7"/><path d="m21 13 6 6" stroke-width="2.600"/></g></svg></button></form>
  <section><h2>Recent Posts</h2><ul><li><a href="#">Post Template</a></li><li><a href="#">2024 Water Restrictions for the City of<br>Carrollton</a></li><li><a href="#">Best Sprinkler Repair Technicians in<br>Carrollton</a></li></ul></section>
  <section><h2>Categories</h2><ul><li><a href="#">Blog</a></li><li><a href="#">Uncategorized</a></li></ul></section>
  <section><h2>Meta</h2><ul><li><a href="#">Site Admin</a></li><li><a href="#">Log out</a></li><li><a href="#">Entries feed</a></li><li><a href="#">Comments feed</a></li><li><a href="#">WordPress.org</a></li></ul></section>
  <section><h3>Product Categories</h3></section>
</aside>
</div>

<footer class="site-footer">
  <div class="foot-grid">
    <a href="#" class="foot-logo" aria-label="Carrollton Sprinkler Repair">
      <svg viewBox="0 0 92 35"><use href="#arcs" width="92" height="24"/><use href="#drops" width="92" height="35"/><path d="M88.500 16h2.500v18h-3.500V23h1z" fill="#000" stroke="#555" stroke-width=".4"/><path d="M0 33.500h92v1H0z" fill="#444"/>
      <g class="logo-text halo"><text x="1" y="32.500" fill="#0b2a30">Carrollton</text><text x="36" y="32.500" fill="#3d9a2e">Sprinkler</text><text x="64" y="32.500" fill="#0b2a30">Repair</text></g></svg>
    </a>
    <section><h2>Quick Links</h2><ul><li><a href="#">Privacy Policy</a></li><li><a href="#">Contact</a></li><li><a href="#">Sitemap</a></li></ul></section>
    <section><h2>Latest Posts</h2><ul><li><a href="#">Post Template</a></li><li><a href="#">2024 Water Restrictions for the City of<br>Carrollton</a></li><li><a href="#">Best Sprinkler Repair Technicians in<br>Carrollton</a></li></ul></section>
    <section><h2>Contact Us</h2><address>Ph. : 469-289-1411<br>Loc: TX LI 6529</address></section>
  </div>
  <p class="copy">Copyright © 2025 Carrollton Sprinkler Repair. Powered by SpinklerRepair.com</p>
  <button type="button" class="chat" aria-label="Chat"><svg viewBox="0 0 12 12"><path d="M1 0h10q1 0 1 1v7q0 1-1 1H3l-3 3V1q0-1 1-1z" fill="#fff"/></svg></button>
</footer>
</body>
</html>
```

FILE: styles.css
```css
* { box-sizing: border-box; }
body, h1, h2, h3, h4, p, ul, blockquote { margin: 0; padding: 0; }
ul { list-style: none; }
svg { display: block; flex: none; }
button { border: 0; padding: 0; font: inherit; }
body {
  background: #fff;
  color: #404248;
  font: 7px/13px Lato, sans-serif;
}
.defs { position: absolute; width: 0; height: 0; }
i { font-family: "DejaVu Sans", sans-serif; font-style: normal; line-height: 1; }

/* admin bar */
.adminbar {
  display: flex;
  justify-content: space-between;
  height: 17px;
  padding: 0 4px;
  background: #1d2327;
  color: #f0f0f1;
  font: 7px/17px "Open Sans", "Noto Sans", sans-serif;
}
.adminbar ul { display: flex; align-items: center; gap: 8px; }
.adminbar a { display: flex; align-items: center; gap: 3px; color: inherit; text-decoration: none; white-space: nowrap; }
.adminbar .seo a { gap: 2px; }
.adminbar .dim { color: #8c8f94; }
.count { width: 10px; height: 10px; border-radius: 5px; background: #d63638; color: #fff; font-size: 6px; line-height: 10px; font-weight: 400; text-align: center; }
.ic9 { width: 9px; height: 9px; }
.ic10 { width: 10px; height: 10px; }
.ic11 { width: 11px; height: 11px; }
.ic12 { width: 13px; height: 11px; }

/* site header */
.site-header { border-bottom: 1px solid #ddd; }
.header-inner { display: flex; align-items: center; max-width: 781px; height: 84px; margin: 0 auto; padding-right: 13px; }
.logo svg { width: 92px; height: 35px; }
.logo-text { font: 900 7px Roboto, sans-serif; }
.halo { paint-order: stroke; stroke: #d8eef2; stroke-width: 1px; }
.rating { display: flex; align-items: center; gap: 3px; margin-left: 138px; font-size: 8px; line-height: 12px; }
.mini-stars { display: flex; }
.mini-stars svg { width: 6px; height: 6px; }
.main-nav { display: flex; gap: 22px; margin-left: auto; font-size: 9px; }
.main-nav a { color: #777; text-decoration: none; }
.contact-btn { width: 58px; height: 22px; margin-left: 38px; border-radius: 2px; background: #2c965d; color: #fff; font-size: 9px; }

.page-title { height: 44px; padding-top: 1px; background: #cdcdcd; color: #fff; text-align: center; font-family: "Open Sans", "Noto Sans", sans-serif; }
.page-title h1 { font-size: 13px; line-height: 18px; font-weight: 400; }
.page-title p { padding-top: 8px; font-size: 9px; line-height: 16px; }
.page-title a { color: inherit; }

/* two-column layout */
.layout { display: grid; grid-template-columns: minmax(0, 1fr) 190px; max-width: 635px; margin: 0 auto; }
.content { padding: 37px 22px 32px 5px; }
.sec { width: fit-content; margin: 17px 0 13px; padding-bottom: 5px; border-bottom: 1px solid #1273aa; font: 400 13px/19px "Open Sans", "Noto Sans", sans-serif; }
.sec.green { border-color: #4caf50; }
.sec.indigo { border-color: #667eea; }
.card { overflow: hidden; border-radius: 4px; background: #fff; box-shadow: 0 1px 6px rgba(0, 0, 0, .1); }
.card h3 { font: 700 14px/17px "Liberation Serif", serif; color: #333; }

/* testimonials */
.t-head { display: flex; flex-direction: column; padding: 11px 11px 10px; background: #1273aa; color: #fff; font-family: "Open Sans", "Noto Sans", sans-serif; }
.card .t-head h3 { display: flex; align-items: center; gap: 6px; margin-bottom: 8px; padding-left: 2px; color: #fff; font-size: 15px; }
.ic14 { width: 13px; height: 13px; }
.t-head strong { font-size: 8px; line-height: 15px; font-weight: 600; }
.t-head time { font-size: 7px; line-height: 15px; }
.t-body { padding: 11px; }
.quote { font: italic 7px/13px "Open Sans", "Noto Sans", sans-serif; }
.quote span, .v-long span, blockquote span { display: block; white-space: nowrap; }
.media { display: flex; flex-direction: column; align-items: center; justify-content: space-between; height: 85px; margin-top: 8px; padding: 21px 0 8px; border: 1px dashed #ddd; border-radius: 4px; background: #f8f9fb; color: #666; font-size: 8px; }
.ic26 { width: 26px; height: 26px; }
.t-foot { height: 29px; border-top: 2px solid #1273aa; background: #f8f9fb; color: #333; line-height: 27px; text-align: center; }

/* service visits */
.v-head { padding: 11px 11px 10px; border-bottom: 1px solid #eee; }
.v-head h3 { margin-bottom: 8px; }
.meta { display: flex; justify-content: space-between; margin-bottom: 8px; font-size: 8px; line-height: 14px; color: #666; }
.addr { display: flex; align-items: center; gap: 6px; padding-left: 2px; font-size: 8px; line-height: 14px; font-weight: 700; }
.icpin { width: 5px; height: 8px; }
.pink { color: #e91e63; }
.blue { color: #1273aa; }
.map { position: relative; height: 109px; margin: 0 11px; border: 1px solid #ddd; border-radius: 4px; overflow: hidden; }
.map-art { width: 100%; height: 107px; }
.map-lbl { font: 5px "Noto Sans", sans-serif; fill: #333; text-anchor: middle; }
.zoomer { position: absolute; left: 5px; top: 5px; width: 18px; border: 1px solid rgba(0, 0, 0, .2); border-radius: 2px; }
.zoomer button { display: block; width: 100%; height: 16px; background: #fff; color: #000; font: 700 11px/16px "Liberation Mono", monospace; }
.zoomer button + button { border-top: 1px solid #ccc; }
.popup { position: absolute; left: 50%; top: 3px; display: flex; flex-direction: column; justify-content: center; height: 27px; padding: 0 14px 0 11px; border-radius: 6px; background: #fff; box-shadow: 0 1px 5px rgba(0, 0, 0, .4); transform: translateX(-50%); font: 5px/6px "Liberation Sans", sans-serif; white-space: nowrap; color: #333; }
.popup::after { content: ""; position: absolute; left: 50%; bottom: -4px; margin-left: -5px; border: 5px solid transparent; border-top-color: #fff; border-bottom: 0; }
.popup b { position: absolute; right: 5px; top: 6px; font-size: 9px; font-weight: 400; color: #757575; }
.marker { position: absolute; left: 50%; top: 33px; width: 14px; height: 22px; margin-left: -7px; }
.attrib { position: absolute; right: 0; bottom: 0; display: flex; align-items: center; gap: 2px; padding: 0 3px 0 2px; background: rgba(255, 255, 255, .8); color: #333; font: 7px/9px "Liberation Sans", sans-serif; white-space: nowrap; }
.attrib svg { width: 6px; height: 4px; }
.attrib a { color: #0078a8; text-decoration: none; }
.v-text { padding: 11px 11px 10px; font-size: 8px; line-height: 14px; text-align: center; }
.v-long { padding-bottom: 9px; }
.tags { display: flex; gap: 4px; height: 39px; padding: 0 11px; border-top: 1px solid #eee; background: #f9f9f9; line-height: 38px; font-weight: 700; }
.tags a { color: #1976d2; text-decoration: none; }
.photo { position: relative; width: 194px; height: 81px; margin: 0 11px 11px; border-radius: 4px; box-shadow: 0 1px 5px rgba(0, 0, 0, .2); display: flex; align-items: flex-start; font-size: 9px; line-height: 16px; }
.photo svg { width: 8px; height: 9px; }
.photo b { position: absolute; left: 5px; top: 5px; padding: 0 4px; border-radius: 2px; background: rgba(0, 0, 0, .7); color: #fff; font-size: 7px; line-height: 16px; }

/* customer reviews */
.r-rate { display: flex; flex-direction: column; align-items: center; padding: 11px 0 12px; border-bottom: 1px solid #eee; }
.card h4 { font: 600 8px/16px "Open Sans", "Noto Sans", sans-serif; color: #333; }
.stars { display: flex; gap: 6px; margin: 17px 0 16px; }
.stars svg { width: 13px; height: 13px; filter: drop-shadow(0 1px 1px rgba(0, 0, 0, .25)); }
.r-rate p { font: 600 9px/17px "Open Sans", "Noto Sans", sans-serif; color: #4caf50; }
.r-quote { padding: 11px 11px 10px; border-bottom: 1px solid #eee; }
.loc { display: flex; align-items: center; gap: 4px; width: fit-content; height: 20px; margin-bottom: 9px; padding: 0 6px 0 8px; border-radius: 2px; background: #1273aa; color: #fff; }
.loc svg { width: 4px; height: 7px; }
blockquote { height: 42px; padding: 8px 9px; border-left: 2px solid #4caf50; border-radius: 4px; background: #f8f9fb; font-size: 8px; line-height: 13px; font-style: italic; }
.r-high { padding: 11px; }
.pair { display: grid; grid-template-columns: 1fr 1fr; gap: 8px; margin-top: 8px; }
.pair > div { display: flex; flex-direction: column; align-items: center; height: 74px; padding-top: 13px; border: 1px solid #4caf50; border-radius: 4px; background: #f1f7e8; }
.pair svg { width: 12px; height: 13px; margin-bottom: 9px; }
.pair span { color: #666; line-height: 13px; }
.pair strong { margin-top: 1px; font-size: 8px; line-height: 15px; color: #333; }
.r-rec { display: flex; flex-direction: column; align-items: center; height: 110px; padding-top: 23px; border-bottom: 2px solid #4caf50; background: linear-gradient(135deg, #4caf50, #66bb6a); color: #fff; }
.card .r-rec h4 { margin-top: 14px; color: #fff; }
.r-rec p { margin-top: 4px; font-size: 8px; line-height: 14px; opacity: .9; }
.r-foot { height: 27px; background: #e8f5e9; color: #2e7d32; line-height: 27px; text-align: center; }

/* blog posts */
.post { border: 1px solid #e1e5e9; border-radius: 6px; }
.post header { padding: 13px; background: linear-gradient(135deg, #667eea, #764ba2); }
.card.post h3 { color: #fff; font: 700 11px/16px "Open Sans", "Noto Sans", sans-serif; }
.post h3 span { display: block; white-space: nowrap; }
.post > p { padding: 12px 13px; font-size: 9px; line-height: 15px; }
.post > p span { display: block; width: max-content; min-width: 100%; white-space: nowrap; text-align-last: justify; }
.post > p span:last-child { text-align-last: left; }
.post footer { display: flex; align-items: center; justify-content: space-between; margin: 0 13px; padding: 9px 0 12px; border-top: 1px solid #eee; }
.pub { display: flex; align-items: center; gap: 5px; height: 22px; padding: 0 8px 0 9px; border-radius: 11px; background: #f8f9fb; color: #666; font-size: 8px; }
.pub svg { width: 8px; height: 7px; }
.badge { height: 18px; padding: 0 7px; border-radius: 9px; background: linear-gradient(135deg, #667eea, #764ba2); color: #fff; font-weight: 700; line-height: 18px; }
.edit { margin: 24px 0 0 -5px; font-size: 9px; line-height: 16px; }
.edit a { color: #2c965d; }

/* sidebar */
.sidebar { padding: 32px 0 0 16px; border-left: 1px solid #e4e4e4; font: 9px/16px Lato, sans-serif; }
.search { position: relative; margin-bottom: 23px; }
.search input { display: block; width: 100%; height: 28px; padding: 0 5px; border: 1px solid #ccc; border-radius: 2px; background: #fff; font: inherit; appearance: none; }
.search input::placeholder { color: #ccc; }
.search button { position: absolute; right: -3px; top: 9px; background: none; }
.search button svg { width: 14px; height: 10px; }
.sidebar section { margin-bottom: 22px; }
.sidebar h2, .site-footer h2 { position: relative; padding-bottom: 5px; border-bottom: 1px solid #e0e0e0; font: 700 14px/18px "Liberation Serif", serif; }
.sidebar h2::after, .site-footer h2::after { content: ""; position: absolute; left: 0; bottom: -1px; width: 16px; height: 1px; background: #2c965d; }
.sidebar h3 { font: 700 12px/18px "Liberation Serif", serif; }
.sidebar ul { display: grid; gap: 4px; margin-top: 10px; }
.sidebar a { color: #2c965d; }

/* footer */
.site-footer { position: relative; border-top: 1px solid #ccc; background: #18191b; color: #fff; font: 8px/14px Lato, sans-serif; }
.foot-grid { display: grid; grid-template-columns: repeat(4, 1fr); gap: 17px; max-width: 635px; height: 168px; margin: 0 auto; padding-top: 32px; }
.foot-logo { padding: 29px 0 0 5px; }
.foot-logo svg { width: 100px; height: 38px; }
.site-footer h2 { padding-bottom: 4px; border-color: #ddd; }
.site-footer ul { display: grid; gap: 4px; margin-top: 3px; }
.site-footer a { color: #fff; text-decoration: none; }
address { margin-top: 1px; color: #bbb; font-style: normal; line-height: 16px; }
.copy { border-top: 1px solid #3f4042; line-height: 39px; text-align: center; }
.chat { position: absolute; right: 12px; bottom: 15px; display: grid; place-items: center; width: 26px; height: 26px; border-radius: 13px; background: #0e6dc0; box-shadow: -1px -3px 0 #26272b; }
.chat svg { width: 12px; height: 12px; }
```
